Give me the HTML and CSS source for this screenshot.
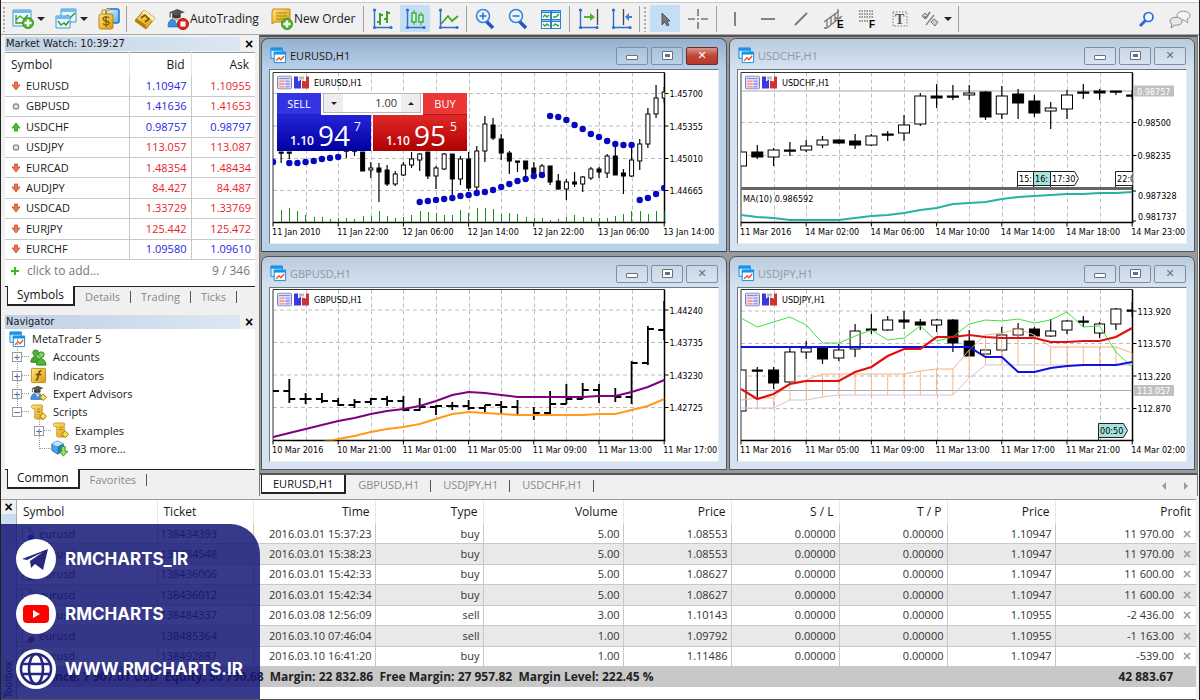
FILE: index.html
```html
<!DOCTYPE html>
<html lang="en">
<head>
<meta charset="utf-8">
<title>MetaTrader 5</title>
<link rel="stylesheet" href="styles.css">
</head>
<body>
<svg class="defs" aria-hidden="true">
  <defs>
    <linearGradient id="gold" x1="0" y1="0" x2="1" y2="1"><stop offset="0" stop-color="#ffe680"/><stop offset="1" stop-color="#d99a08"/></linearGradient>
    <linearGradient id="sky" x1="0" y1="0" x2="1" y2="1"><stop offset="0" stop-color="#dff1fd"/><stop offset="1" stop-color="#5fb2ea"/></linearGradient>
    <symbol id="plus" viewBox="0 0 10 10"><circle cx="5" cy="5" r="4.6" fill="#4fb52c" stroke="#2f8a18" stroke-width=".7"/><path d="M5 2v6M2 5h6" stroke="#fff" stroke-width="2"/></symbol>
    <symbol id="win" viewBox="0 0 18 18"><path d="M1 1h12v11H1z" fill="#d8efff" stroke="#0b8be0"/><path d="M1 1h12v3H1z" fill="#1295ea"/><path d="M4.500 5.500h12v11h-12z" fill="#fff" stroke="#0b8be0"/><path d="M4 5h13v3H4z" fill="#1295ea"/><path d="M6.500 14.500l3-3 2 2 3.500-4" fill="none" stroke="#ee5522" stroke-width="1.500"/></symbol>
    <symbol id="scroll" viewBox="0 0 18 18"><path d="M3 1h9c2 0 2 2 1 3v8h2c2 1 1 4-1 4H7c-2 0-3-2-2-4V5H3C1 4 1 1 3 1z" fill="url(#gold)" stroke="#c08a10" stroke-width=".8"/><path d="M7 5.500h4M7 8h4" stroke="#b97e08"/><path d="M14 9.500l3.500 3.500-3.500 3.500-3.500-3.500z" fill="#ffe04a" stroke="#9c7a10"/></symbol>
    <symbol id="expert" viewBox="0 0 20 20"><path d="M1 18c0-6 3-8 7-8s8 2 8 8z" fill="#3f8fdf" stroke="#1d5fa8" stroke-width=".7"/><circle cx="9" cy="8" r="4" fill="#e0b990"/><path d="M8 12l1.500 3 2-3z" fill="#fff"/><path d="M2 4l8-3 7 3-8 3z" fill="#555"/><path d="M5 5v4c2 1 6 1 8 0V5l-4 2z" fill="#3c3c3c"/><path d="M3 4v5" stroke="#444"/></symbol>
    <symbol id="down" viewBox="0 0 10 10"><path d="M3.500 1h3v3H9L5 9 1 4h2.500z" fill="#f0714c" stroke="#cf4a28" stroke-width=".8"/></symbol>
    <symbol id="up" viewBox="0 0 10 10"><path d="M3.500 9h3V6H9L5 1 1 6h2.500z" fill="#44c32c" stroke="#259414" stroke-width=".8"/></symbol>
    <symbol id="flat" viewBox="0 0 10 10"><circle cx="5" cy="5.500" r="2.600" fill="#e8e8e8" stroke="#8c8c8c" stroke-width="1.400"/></symbol>
    <symbol id="axes" viewBox="0 0 24 24"><path d="M4.500 2v18.500H22" fill="none" stroke="#2f6ecb" stroke-width="1.400"/><circle cx="4.500" cy="3" r="1.600" fill="#2f6ecb"/><circle cx="4.500" cy="20.500" r="1.600" fill="#2f6ecb"/><circle cx="21" cy="20.500" r="1.600" fill="#2f6ecb"/></symbol>
    <symbol id="doc" viewBox="0 0 16 16"><path d="M2 1h8l4 4v10H2z" fill="#fff" stroke="#888"/><path d="M10 1v4h4" fill="none" stroke="#888"/></symbol>
    <symbol id="badges" viewBox="0 0 32 14"><rect x=".5" y=".5" width="14" height="13" rx="1.500" fill="#dcdcf8" stroke="#7c7cb0"/><path d="M2 3h11" stroke="#8c8cc4"/><path d="M2.500 5h5v7h-5z" fill="#f2a0a0"/><path d="M8.500 5h4v7h-4z" fill="#9b9bf2"/><path d="M3 7h9M3 10h9" stroke="#fff" stroke-width=".7"/><path d="M17 1h4v5l3-2v9h-7z" fill="#3c38e0"/><path d="M32 1h-3v5l-4-1v8h7z" fill="#cf3434"/><path d="M22 1h5v3h-5z" fill="#bbb"/></symbol>
  </defs>
</svg>

<header class="toolbar">
  <span class="grip"></span>
  <button class="tool menu" aria-label="New chart"><svg viewBox="0 0 24 24"><path d="M2 3h18v16H2z" fill="#eef8ff" stroke="#3f9ad8"/><path d="M2 3h18v3H2z" fill="#6cbcf0"/><path d="M5 8v8h12M5 13l4-4 4 3 4-4" fill="none" stroke="#39982a" stroke-width="1.300"/><use href="#plus" x="11" y="10" width="12" height="12"/></svg><i class="arrow"></i></button>
  <button class="tool menu" aria-label="Profiles"><svg viewBox="0 0 24 24"><path d="M7 2h15v13H7z" fill="#e6f5ff" stroke="#3f9ad8"/><path d="M7 2h15v3H7z" fill="#6cbcf0"/><path d="M13 8l3 3 5-5" fill="none" stroke="#39982a" stroke-width="1.500"/><path d="M2 9h14v12H2z" fill="#e6f5ff" stroke="#3f9ad8"/><path d="M2 9h14v3H2z" fill="#6cbcf0"/><path d="M4 14l3 4 3-2 2 2 3-4" fill="none" stroke="#39982a" stroke-width="1.500"/></svg><i class="arrow"></i></button>
  <button class="tool slim" aria-label="Symbols"><svg viewBox="0 0 24 24"><rect x="9" y="2" width="13" height="14" rx="2" fill="url(#sky)" stroke="#1f73c0" stroke-width="1.500"/><path d="M5 6V5c0-1 1-2 2-2h6" fill="none" stroke="#e0b030" stroke-width="2"/><rect x="2" y="7" width="14" height="15" rx="2" fill="url(#gold)" stroke="#b98408"/><path d="M12 11c-1-1.500-6-1.500-6 1s6 1.500 6 4-5 2.500-6 .500M9 9v11" fill="none" stroke="#8c5c00" stroke-width="1.300"/></svg></button>
  <span class="sep"></span>
  <button class="tool" aria-label="Market"><svg viewBox="0 0 24 24"><path d="M2 14l9-11 11 8-9 11z" fill="url(#gold)" stroke="#a97808"/><path d="M2 14l11 8v-4L3 11z" fill="#b98110"/><path d="M11 3l11 8-2 3L9 6z" fill="#ffefaa"/><path d="M8 11l4-3 4 4-4 3" fill="none" stroke="#7b5200" stroke-width="1.700"/></svg></button>
  <button class="tool auto"><svg viewBox="0 0 24 24"><use href="#expert" x="1" y="1" width="21" height="21"/><circle cx="17" cy="17" r="5.500" fill="#e02a1e" stroke="#a81410"/><rect x="14.500" y="14.500" width="5" height="5" fill="#fff"/></svg>AutoTrading</button>
  <button class="tool order"><svg viewBox="0 0 24 24"><path d="M3 2h17v13H5l-3 2V5z" fill="url(#gold)" stroke="#c08a10"/><path d="M6 6h11M6 9h11M6 12h8" stroke="#b57e0c"/><use href="#plus" x="11" y="11" width="12" height="12"/></svg>New Order</button>
  <span class="sep"></span>
  <button class="tool" aria-label="Bar chart"><svg viewBox="0 0 24 24"><use href="#axes"/><path d="M10 6v12M7 15h3M10 8h3M17 4v12M14 12h3M17 6h3" stroke="#3ba421" stroke-width="2"/></svg></button>
  <button class="tool on" aria-label="Candlesticks"><svg viewBox="0 0 24 24"><use href="#axes"/><path d="M11 3v15M18 5v13" stroke="#3ba421"/><rect x="9" y="6" width="4" height="9" fill="#cfe" stroke="#3ba421" stroke-width="1.300"/><rect x="16" y="8" width="4" height="7" fill="#cfe" stroke="#3ba421" stroke-width="1.300"/></svg></button>
  <button class="tool" aria-label="Line chart"><svg viewBox="0 0 24 24"><use href="#axes"/><path d="M5 17l7-8 4 5 6-5" fill="none" stroke="#3ba421" stroke-width="1.700"/></svg></button>
  <span class="sep"></span>
  <button class="tool" aria-label="Zoom in"><svg viewBox="0 0 24 24"><path d="M13 14l7 7" stroke="#2358b8" stroke-width="3.500"/><circle cx="10" cy="9" r="6.500" fill="#e9f5ff" stroke="#3c80dd" stroke-width="1.500"/><path d="M10 5.500v7M6.500 9h7" stroke="#2b6fd0" stroke-width="1.500"/></svg></button>
  <button class="tool" aria-label="Zoom out"><svg viewBox="0 0 24 24"><path d="M13 14l7 7" stroke="#2358b8" stroke-width="3.500"/><circle cx="10" cy="9" r="6.500" fill="#e9f5ff" stroke="#3c80dd" stroke-width="1.500"/><path d="M6.500 9h7" stroke="#2b6fd0" stroke-width="1.500"/></svg></button>
  <button class="tool" aria-label="Tile windows"><svg viewBox="0 0 24 24"><path d="M2 3h20v19H2z" fill="#2c7fd4"/><path d="M3 6h8v6H3zM13 6h8v6h-8zM3 15h8v6H3zM13 15h8v6h-8z" fill="#effaff"/><path d="M4 10l2-2 2 2 2-2M14 10h3l3-3M4 17l2 2 2-2 2 2M14 19l2-2 4 2" fill="none" stroke="#3ba421" stroke-width="1.400"/><path d="M3 4.500h8M13 4.500h8M3 13.500h8M13 13.500h8" stroke="#7ebef0"/></svg></button>
  <span class="sep"></span>
  <button class="tool" aria-label="Auto scroll"><svg viewBox="0 0 24 24"><use href="#axes"/><path d="M21.500 2v16" stroke="#444" stroke-width="1.300"/><path d="M8 9h6V6l5 4-5 4v-3H8z" fill="#4fb52c"/></svg></button>
  <button class="tool" aria-label="Chart shift"><svg viewBox="0 0 24 24"><use href="#axes"/><path d="M14.500 2v16" stroke="#444" stroke-width="1.300"/><path d="M23 9h-3V6l-4 4 4 4v-3h3z" fill="#3c80dd"/></svg></button>
  <span class="sep"></span>
  <span class="grip"></span>
  <button class="tool on" aria-label="Cursor"><svg viewBox="0 0 24 24"><path d="M9 6v12l3-3 2 4 2-1-2-4h3z" fill="#777" stroke="#444" stroke-width=".8"/></svg></button>
  <button class="tool" aria-label="Crosshair"><svg viewBox="0 0 24 24"><path d="M12 2v7M12 15v7M2 12h7M15 12h7M11 12h2" stroke="#777" stroke-width="1.600"/></svg></button>
  <span class="sep"></span>
  <button class="tool" aria-label="Vertical line"><svg viewBox="0 0 24 24"><path d="M12 5v14" stroke="#777" stroke-width="1.800"/></svg></button>
  <button class="tool" aria-label="Horizontal line"><svg viewBox="0 0 24 24"><path d="M5 12h14" stroke="#777" stroke-width="1.800"/></svg></button>
  <button class="tool" aria-label="Trend line"><svg viewBox="0 0 24 24"><path d="M6 18L18 6" stroke="#777" stroke-width="1.800"/></svg></button>
  <button class="tool" aria-label="Equidistant channel"><svg viewBox="0 0 24 24"><path d="M2 15L17 4M5 21L20 9M5 12v9M9 9v9M13 6v9M16 2v8M2 21h3M13 11h6" stroke="#777" stroke-width="1.300"/><text x="15" y="21" class="glyph">E</text></svg></button>
  <button class="tool" aria-label="Fibonacci"><svg viewBox="0 0 24 24"><path d="M4 4h15M4 7h15M4 10h15M4 14h9" stroke="#777" stroke-width="1.300" stroke-dasharray="1.500 1"/><text x="14" y="21" class="glyph">F</text></svg></button>
  <button class="tool" aria-label="Text"><svg viewBox="0 0 24 24"><path d="M5 5h14v14H5z" fill="none" stroke="#777" stroke-dasharray="1.500 1.500"/><text x="7" y="17" class="glyph serif">T</text></svg></button>
  <button class="tool menu last" aria-label="Objects"><svg viewBox="0 0 24 24"><path d="M4 9l3 3 3-3-3-3z" fill="#ddd" stroke="#777"/><path d="M6 9l2 2 4-6" fill="none" stroke="#777" stroke-width="1.500"/><path d="M8 18l8-10" stroke="#888" stroke-width="1.500"/><path d="M13 15l3-3 4 3-3 4z" fill="#ccc" stroke="#777"/></svg><i class="arrow"></i></button>
  <span class="sep"></span>
  <span class="spacer"></span>
  <button class="tool" aria-label="Search"><svg viewBox="0 0 24 24"><path d="M5 19l6-6" stroke="#2c6bd4" stroke-width="3"/><circle cx="13.500" cy="10" r="4.500" fill="#eaf5ff" stroke="#2c6bd4" stroke-width="1.700"/></svg></button>
  <button class="tool" aria-label="Chat"><svg viewBox="0 0 24 24"><path d="M9 8c0-5 13-5 13 0 0 3-2 4-3 4l1 4-4-3c-5 0-7-2-7-5z" fill="#f4f4f4" stroke="#999"/><path d="M2 14c0-5 12-5 12 0s-6 4-7 4l-4 3 1-4c-1 0-2-2-2-3z" fill="#e8e8e8" stroke="#888"/></svg></button>
</header>

<main class="middle">
  <aside class="side">
    <section class="panel">
      <h2 class="panel-title">Market Watch: 10:39:27<button class="close" aria-label="Close Market Watch">×</button></h2>
      <table class="quotes">
        <colgroup><col class="q-sym"><col class="q-bid"><col></colgroup>
        <thead><tr><th>Symbol</th><th>Bid</th><th>Ask</th></tr></thead>
        <tbody>
          <tr><td><svg><use href="#down"/></svg>EURUSD</td><td class="b">1.10947</td><td class="r">1.10955</td></tr>
          <tr><td><svg><use href="#flat"/></svg>GBPUSD</td><td class="b">1.41636</td><td class="r">1.41653</td></tr>
          <tr><td><svg><use href="#up"/></svg>USDCHF</td><td class="b">0.98757</td><td class="b">0.98797</td></tr>
          <tr><td><svg><use href="#flat"/></svg>USDJPY</td><td class="r">113.057</td><td class="r">113.087</td></tr>
          <tr><td><svg><use href="#down"/></svg>EURCAD</td><td class="r">1.48354</td><td class="r">1.48434</td></tr>
          <tr><td><svg><use href="#down"/></svg>AUDJPY</td><td class="r">84.427</td><td class="r">84.487</td></tr>
          <tr><td><svg><use href="#down"/></svg>USDCAD</td><td class="r">1.33729</td><td class="r">1.33769</td></tr>
          <tr><td><svg><use href="#down"/></svg>EURJPY</td><td class="r">125.442</td><td class="r">125.472</td></tr>
          <tr><td><svg><use href="#down"/></svg>EURCHF</td><td class="b">1.09580</td><td class="b">1.09610</td></tr>
        </tbody>
      </table>
      <div class="add-row"><svg viewBox="0 0 10 10"><path d="M5 1v8M1 5h8" stroke="#3fb822" stroke-width="2"/></svg><span>click to add...</span><span class="count">9 / 346</span></div>
      <nav class="tabs"><button class="tab active">Symbols</button><button class="tab">Details</button><button class="tab">Trading</button><button class="tab">Ticks</button></nav>
    </section>
    <section class="panel navigator">
      <h2 class="panel-title">Navigator<button class="close" aria-label="Close Navigator">×</button></h2>
      <ul class="tree">
        <li class="root"><svg><use href="#win"/></svg>MetaTrader 5</li>
        <li class="l1"><button aria-label="Expand Accounts">+</button><svg viewBox="0 0 18 18"><circle cx="6" cy="4" r="3" fill="#58b53b" stroke="#2c7d1b"/><path d="M1 14c0-8 9-8 10 0z" fill="#4aa82e" stroke="#2c7d1b"/><circle cx="12" cy="6" r="3" fill="#7fd35e" stroke="#2c7d1b"/><path d="M7 17c0-9 9-9 10 0z" fill="#53b836" stroke="#2c7d1b"/></svg>Accounts</li>
        <li class="l1"><button aria-label="Expand Indicators">+</button><svg viewBox="0 0 18 18"><rect x="1.500" y="1.500" width="15" height="15" rx="1" fill="url(#gold)" stroke="#c08a10"/><path d="M12 4c-4-1-2 10-6 10M6 8h6" fill="none" stroke="#6b4500" stroke-width="1.500"/></svg>Indicators</li>
        <li class="l1"><button aria-label="Expand Expert Advisors">+</button><svg viewBox="0 0 18 18"><use href="#expert" width="17" height="17"/><path d="M14 9.500l3.500 3.500-3.500 3.500-3.500-3.500z" fill="#ffe04a" stroke="#9c7a10"/></svg>Expert Advisors</li>
        <li class="l1"><button aria-label="Collapse Scripts">−</button><svg><use href="#scroll"/></svg>Scripts</li>
        <li class="l2"><button aria-label="Expand Examples">+</button><svg><use href="#scroll"/></svg>Examples</li>
        <li class="l2 leaf"><svg viewBox="0 0 18 18"><path d="M1 4l6-3 6 3v7l-6 4-6-4z" fill="#4aa5e6" stroke="#1d6eb0"/><path d="M1 4l6 3 6-3-6-3z" fill="#bfe3fa"/><path d="M7 7v8l6-4V4z" fill="#2277bd"/><path d="M11 7h4v5h3l-5 5-4-5h2z" fill="#8fe05c" stroke="#3c8f1b"/></svg>93 more...</li>
      </ul>
      <nav class="tabs"><button class="tab active">Common</button><button class="tab">Favorites</button></nav>
    </section>
  </aside>

  <section class="workspace">
    <div class="windows">
      <article class="window current">
        <header><svg><use href="#win"/></svg><h3>EURUSD,H1</h3><button class="wb min" aria-label="Minimize"></button><button class="wb max" aria-label="Maximize"></button><button class="wb x" aria-label="Close">✕</button></header>
        <div class="client"><svg class="chart" id="eurusd" viewBox="270 70 448 173"></svg>
          <form class="trade">
            <button type="button" class="sell">SELL</button>
            <div class="lots"><button type="button" aria-label="Decrease"><i class="arrow"></i></button><input aria-label="Volume" value="1.00"><button type="button" aria-label="Increase"><i class="arrow rise"></i></button></div>
            <button type="button" class="buy">BUY</button>
            <div class="price bid"><small>1.10</small><b>94</b><sup>7</sup></div>
            <div class="price ask"><small>1.10</small><b>95</b><sup>5</sup></div>
          </form>
        </div>
      </article>
      <article class="window">
        <header><svg><use href="#win"/></svg><h3>USDCHF,H1</h3><button class="wb min" aria-label="Minimize"></button><button class="wb max" aria-label="Maximize"></button><button class="wb x" aria-label="Close">✕</button></header>
        <div class="client"><svg class="chart" id="usdchf" viewBox="738 70 448 173"></svg></div>
      </article>
      <article class="window">
        <header><svg><use href="#win"/></svg><h3>GBPUSD,H1</h3><button class="wb min" aria-label="Minimize"></button><button class="wb max" aria-label="Maximize"></button><button class="wb x" aria-label="Close">✕</button></header>
        <div class="client"><svg class="chart" id="gbpusd" viewBox="270 288 448 173"></svg></div>
      </article>
      <article class="window">
        <header><svg><use href="#win"/></svg><h3>USDJPY,H1</h3><button class="wb min" aria-label="Minimize"></button><button class="wb max" aria-label="Maximize"></button><button class="wb x" aria-label="Close">✕</button></header>
        <div class="client"><svg class="chart" id="usdjpy" viewBox="738 288 448 173"></svg></div>
      </article>
    </div>
    <nav class="tabs chart-tabs"><button class="tab active">EURUSD,H1</button><button class="tab">GBPUSD,H1</button><button class="tab">USDJPY,H1</button><button class="tab">USDCHF,H1</button><span class="spacer"></span><button class="scroll" aria-label="Scroll left"><i class="arrow left"></i></button><button class="scroll" aria-label="Scroll right"><i class="arrow right"></i></button></nav>
  </section>
</main>

<section class="terminal">
  <div class="rail"><button class="close" aria-label="Close Toolbox">×</button><span>Toolbox</span></div>
  <table class="trades">
    <colgroup><col class="t-sym"><col class="t-tic"><col class="t-time"><col class="t-type"><col class="t-vol"><col class="t-num"><col class="t-num"><col class="t-num"><col class="t-num"><col></colgroup>
    <thead><tr><th>Symbol</th><th>Ticket</th><th>Time</th><th>Type</th><th>Volume</th><th>Price</th><th>S / L</th><th>T / P</th><th>Price</th><th>Profit</th></tr></thead>
    <tbody id="trades"></tbody>
    <tfoot><tr><td colspan="9">Balance: 7 907.01 USD&nbsp; Equity: 50 790.68&nbsp; Margin: 22 832.86&nbsp; Free Margin: 27 957.82&nbsp; Margin Level: 222.45 %</td><td>42 883.67</td></tr></tfoot>
  </table>
  <div class="social">
    <a href="#telegram"><svg viewBox="0 0 40 40"><circle cx="20" cy="20" r="20" fill="#fff"/><path d="M6 20L32 10l-5 21-8-6-4 4-1-7 13-9-16 8z" fill="#26277f"/></svg>RMCHARTS_IR</a>
    <a href="#youtube"><svg viewBox="0 0 40 40"><circle cx="20" cy="20" r="20" fill="#fff"/><rect x="7" y="11" width="26" height="18" rx="4" fill="#f00"/><path d="M17 16l7 4-7 4z" fill="#fff"/></svg>RMCHARTS</a>
    <a href="#site"><svg viewBox="0 0 40 40"><circle cx="20" cy="20" r="20" fill="#fff"/><g fill="none" stroke="#26277f" stroke-width="2.600"><circle cx="20" cy="20" r="15"/><ellipse cx="20" cy="20" rx="7" ry="15"/><path d="M6 15h28M6 25h28"/></g></svg>WWW.RMCHARTS.IR</a>
  </div>
</section>
<script src="charts.js"></script>
</body>
</html>
```

FILE: styles.css
```css
*, *::before, *::after { box-sizing: border-box; }
body {
  margin: 0;
  min-height: 100vh;
  display: flex;
  flex-direction: column;
  overflow: hidden;
  background: #f0f0f0;
  border-left: 1px solid #222;
  border-right: 1px solid #222;
  font: 12px/16px "Open Sans", "Noto Sans", sans-serif;
  color: #1a1a1a;
}
button { font: inherit; color: inherit; background: none; border: 0; padding: 0; margin: 0; }
h2, h3, ul { margin: 0; padding: 0; font-size: 11px; font-weight: 400; list-style: none; }
.defs { position: absolute; width: 0; height: 0; }
.spacer { flex: 1; }
.arrow { display: block; width: 0; height: 0; border: 4px solid transparent; border-top-color: #222; border-bottom: 0; }
.arrow.rise { border: 3px solid transparent; border-bottom-color: #222; border-top: 0; }
.arrow.left { border: 4px solid transparent; border-right-color: #999; border-left: 0; }
.arrow.right { border: 4px solid transparent; border-left-color: #999; border-right: 0; }

/* toolbar */
.toolbar {
  display: flex;
  align-items: center;
  gap: 3px;
  height: 35px;
  padding: 4px 4px 1px 1px;
  border-bottom: 1px solid #a8a8a8;
  background: linear-gradient(#fafafa 2px, #c8c8c8 2px, #c8c8c8 3px, #f0f0f0 3px);
}
.grip { width: 4px; height: 26px; background: radial-gradient(circle, #aaa 1px, transparent 1px) 0 0 / 4px 4px; }
.sep { width: 1px; height: 26px; background: #a0a0a0; }
.tool { width: 30px; height: 27px; flex: none; display: flex; align-items: center; justify-content: center; white-space: nowrap; }
.tool svg { width: 24px; height: 24px; flex: none; }
.tool.menu { width: 40px; padding-left: 2px; gap: 2px; justify-content: flex-start; }
.tool.slim { width: 28px; }
.tool.last { padding-left: 0; width: 37px; }
.tool.auto { width: 101px; padding-left: 3px; justify-content: flex-start; }
.tool.order { width: 93px; padding-left: 3px; justify-content: flex-start; }
.tool.on { background: #c3def5; }
.glyph { font: 700 10px "Liberation Sans", sans-serif; }
.glyph.serif { font: 700 14px "Liberation Serif", serif; fill: #555; }

/* side panels */
.middle { display: flex; height: 461px; }
.side { width: 258px; padding: 2px 4px 0; flex: none; display: flex; flex-direction: column; gap: 7px; }
.panel-title {
  display: flex;
  align-items: center;
  justify-content: space-between;
  height: 14px;
  padding: 0 1px;
  font: 11px/14px "DejaVu Sans Condensed", sans-serif;
  background: linear-gradient(90deg, #bfd1e4, #dce7f3 94%, #f0f0f0 94%);
}
.close { font: 700 14px/12px "Liberation Sans", sans-serif; color: #000; width: 10px; text-align: center; }
.quotes { width: 100%; height: 208px; margin-top: 1px; table-layout: fixed; border-collapse: collapse; background: #fff; border-top: 1px solid #999; font-size: 11px; }
.q-sym { width: 124px; }
.q-bid { width: 62px; }
.quotes th { height: 24px; padding: 0 6px; font-size: 12px; font-weight: 400; text-align: right; border-right: 1px solid #e4e4e4; }
.quotes td { padding: 0 4px 0 0; text-align: right; border-right: 1px solid #c8c8c8; border-bottom: 1px solid #c8c8c8; line-height: 14px; }
.quotes th:first-child, .quotes td:first-child { text-align: left; padding-left: 6px; }
.quotes td:last-child, .quotes th:last-child { border-right: 0; }
.quotes svg { width: 10px; height: 10px; margin-right: 5px; vertical-align: -1px; }
.b { color: #2626e0; }
.r { color: #e8222c; }
.add-row { display: flex; align-items: center; height: 26px; padding: 0 5px 5px; gap: 7px; background: #fff; color: #777; }
.add-row svg { width: 10px; height: 10px; }
.count { margin-left: auto; }
.tabs { display: flex; height: 22px; color: #888; font-size: 11px; }
.tab { padding: 0 11px 0 10px; position: relative; }
.side .tabs { background: linear-gradient(#222 1px, transparent 1px); padding-left: 2px; }
.side .tab { height: 21px; }
.tab:not(.active)::after { content: ""; position: absolute; right: 0; top: 5px; height: 12px; border-right: 1px solid #555; }
.tab.active { color: #111; background: #fff; border: 2px solid #222; border-top: 0; border-left-width: 1px; padding: 0 9px; }
.side .tab.active { height: 20px; font-size: 12px; }
.tree { display: flex; flex-direction: column; height: 140px; padding: 1px 0 11px; background: #fff; }
.tree li { flex: 1; position: relative; display: flex; align-items: center; gap: 6px; padding-left: 7px; }
.tree svg { width: 17px; height: 17px; flex: none; }
.tree .root { padding-left: 4px; }
.tree .l2 { padding-left: 29px; }
.tree .leaf { padding-left: 46px; }
.tree .l1 svg, .tree .l2:not(.leaf) svg { margin-left: 2px; }
.tree .l1::before, .tree .l2::before {
  content: "";
  position: absolute;
  left: 12px;
  bottom: 50%;
  width: 12px;
  height: 100%;
  border-left: 1px dotted #999;
  border-bottom: 1px dotted #999;
}
.tree .l2::before { left: 34px; }
.tree button { position: relative; width: 10px; height: 10px; border: 1px solid #999; font: 9px/8px "DejaVu Sans", sans-serif; color: #223c8c; flex: none; background: #fff; }

/* charts workspace */
.workspace { flex: 1; display: flex; flex-direction: column; border: 1px solid #777; border-top: 2px solid #555; border-bottom: 0; margin-right: 1px; }
.windows { display: grid; grid-template-columns: 1fr 1fr; gap: 4px 2px; padding: 1px 2px 3px 1px; background: #9a9a9a; border-bottom: 2px solid #555; }
.window { border: 1px solid #4b5661; border-radius: 7px 7px 0 0; padding: 0 7px 7px; background: linear-gradient(#bccbdc, #d5e3f1 30px); color: #8d99a8; height: 214px; }
.window.current { background: linear-gradient(#94b0cf, #b9d1e9 30px); color: #1a1a1a; border-bottom-color: #20465e; }
.window header { display: flex; align-items: center; height: 30px; padding-top: 3px; gap: 2px; }
.window header svg { width: 17px; height: 17px; margin: 0 1px 0 1px; }
.window h3 { flex: 1; }
.wb { width: 32px; height: 18px; border: 1px solid #7f8ea3; border-radius: 2px; display: flex; align-items: center; justify-content: center; color: #667080; margin-left: 1px; font: 700 11px/16px "DejaVu Sans", sans-serif; background: rgba(255,255,255,.12); }
.wb.x { margin-right: 1px; }
.min::before { content: ""; width: 12px; height: 5px; margin-top: 4px; border: 1px solid #667080; background: #fff; border-radius: 1px; }
.max::before { content: ""; width: 11px; height: 9px; border: 1px solid #667080; background: #667080; box-shadow: inset 0 0 0 2px #fff; border-radius: 1px; }
.current .x { color: #fff; background: linear-gradient(#d99488, #c04433 50%, #b33a2b); border-color: #702c24; }
.client { position: relative; background: #fff; border: 1px solid #6d7783; border-right-color: #e8eef4; border-bottom-color: #e8eef4; }
.chart { display: block; width: 100%; height: auto; font: 9px "DejaVu Sans Condensed", "DejaVu Sans", sans-serif; overflow: visible; }
.trade { position: absolute; left: 7px; top: 23px; width: 190px; display: grid; grid-template-columns: 44px 98px 44px; gap: 0 2px; color: #fff; }
.sell, .buy { height: 22px; font-size: 11px; }
.sell { background: #3434e4; border-bottom: 1px solid #2020a8; }
.buy { background: #ec3737; border-bottom: 1px solid #b01818; }
.lots { display: flex; height: 20px; border: 1px solid #b8b8b8; color: #222; background: #fff; font-size: 11px; }
.lots button { width: 19px; flex: none; display: grid; place-items: center; background: #ededed; }
.lots .arrow { border-left-width: 3px; border-right-width: 3px; border-top-width: 3px; }
.lots .rise { border-top-width: 0; }
.lots input { width: 57px; min-width: 0; flex: 1; border: 0; padding: 0 4px; text-align: right; font: inherit; color: #333; }
.price { height: 36px; display: flex; align-items: flex-end; padding: 0 8px 3px 13px; gap: 4px; }
.price.bid { grid-column: 1 / 3; grid-row: 2; width: 94px; background: linear-gradient(#2424d8, #0000a0); }
.price.ask { grid-column: 2 / 4; grid-row: 2; width: 94px; justify-self: end; background: linear-gradient(#e02828, #b00000); }
.price small { font-size: 12px; font-weight: 600; line-height: 14px; }
.price b { font-size: 28px; font-weight: 400; line-height: 26px; }
.price sup { font-size: 12px; line-height: 12px; align-self: flex-start; padding-top: 6px; }
.chart-tabs { background: #f0f0f0; flex: 1; height: auto; padding-left: 1px; }
.chart-tabs .tab { height: 20px; padding: 0 12px; }
.chart-tabs .tab.active { height: 19px; padding: 0 11px; }
.scroll { width: 22px; display: grid; place-items: center; }

/* toolbox */
.terminal { position: relative; display: flex; flex: 1; margin-top: 3px; background: #fff; border-top: 1px solid #999; border-bottom: 1px solid #555; margin-right: 3px; }
.rail { width: 16px; background: linear-gradient(#f0f0f0 14px, #c9dcef 14px, #dce7f3 60px); border-right: 1px solid #aaa; display: flex; flex-direction: column; align-items: center; justify-content: space-between; padding: 1px 0; overflow: hidden; }
.rail span { writing-mode: vertical-rl; transform: rotate(180deg); font: 11px/12px "DejaVu Sans Condensed", sans-serif; }
.trades { flex: 1; height: 187px; table-layout: fixed; border-collapse: collapse; font-size: 11px; }
.t-sym { width: 140px; }
.t-tic { width: 96px; }
.t-time { width: 122px; }
.t-type, .t-num { width: 108px; }
.t-vol { width: 140px; }
.trades th { height: 24px; font-size: 12px; font-weight: 400; text-align: right; padding: 0 5px; border-right: 1px solid #e8e8e8; }
.trades th:nth-child(-n+2) { text-align: left; padding-left: 6px; }
.trades td { text-align: right; padding: 0 3px; line-height: 14px; border-right: 1px solid #c8c8c8; border-bottom: 1px solid #c8c8c8; color: #333; white-space: nowrap; }
.trades tbody tr:nth-child(even) { background: #e9e9e9; }
.trades tbody td:nth-child(-n+2) { text-align: left; }
.trades svg { width: 15px; height: 14px; margin-right: 4px; vertical-align: -3px; }
.trades td:last-child, .trades th:last-child { border-right: 0; }
.trades tbody td:last-child { padding-right: 4px; }
.trades td button { margin-left: 8px; width: 10px; color: #999; font: 700 12px/12px "DejaVu Sans", sans-serif; }
.trades tfoot td { height: 20px; background: #c8c8c8; font-weight: 700; color: #222; }
.trades tfoot td:first-child { padding-left: 12px; text-align: left; border-right: 0; font-size: 12px; }
.trades tfoot td:last-child { padding-right: 23px; font-size: 12px; }
.social { position: absolute; left: 0; bottom: 0; width: 259px; height: 175px; padding: 15px 15px 10px; display: flex; flex-direction: column; justify-content: space-between; background: rgba(20, 22, 118, .85); border-radius: 0 30px 0 0; }
.social a { display: flex; align-items: center; gap: 9px; color: #fff; text-decoration: none; font: 700 17px/20px Inter, sans-serif; }
.social svg { width: 40px; height: 40px; flex: none; }
```

FILE: charts.js
```javascript
const NS = "http://www.w3.org/2000/svg";

function el(parent, tag, attrs, text) {
  const node = document.createElementNS(NS, tag);
  for (const key in attrs) node.setAttribute(key, attrs[key]);
  if (text !== undefined) node.textContent = text;
  parent.appendChild(node);
  return node;
}

function line(svg, x1, y1, x2, y2, stroke = "#000", width = 1, extra = {}) {
  return el(svg, "line", { x1, y1, x2, y2, stroke, "stroke-width": width, ...extra });
}

/* Grid, axes and labels shared by every chart. */
function frame(svg, o) {
  const right = o.x + 391.5;
  for (let k = 1; k < 12; k++) {
    const x = Math.round(o.x + k * 32.6) + 0.5;
    line(svg, x, o.top, x, o.bottom, "#bdbdbd", 1, { "stroke-dasharray": "4 3" });
  }
  o.prices.forEach(([y, label]) => {
    line(svg, o.x, y, right, y, "#bdbdbd", 1, { "stroke-dasharray": "4 3" });
    line(svg, right, y, right + 4, y);
    el(svg, "text", { x: right + 5, y: y + 3.5 }, label);
  });
  line(svg, o.x, o.top, right, o.top, "#333");
  line(svg, o.x, o.top, o.x, o.bottom, "#333");
  line(svg, right, o.top, right, o.bottom, "#000", 1.5);
  line(svg, o.x, o.bottom, right + 1, o.bottom, "#000", 1.5);
  o.times.forEach((label, n) => {
    const x = o.x + n * 65.2;
    line(svg, x, o.bottom, x, o.bottom + 4);
    el(svg, "text", { x: x - 1, y: o.bottom + 12.5 }, label);
  });
  const clip = el(svg, "clipPath", { id: svg.id + "-clip" });
  el(clip, "rect", { x: o.x, y: o.top, width: 391.5, height: o.bottom - o.top });
  return el(svg, "g", { "clip-path": `url(#${svg.id}-clip)` });
}

function caption(svg, o, name) {
  el(svg, "use", { href: "#badges", x: o.x + 4, y: o.top + 3, width: 32, height: 14 });
  el(svg, "text", { x: o.x + 41, y: o.top + 13 }, name);
}

/* Each candle: index, high, body top, body bottom, low, filled. */
function candles(g, x0, step, width, list) {
  list.forEach(([i, high, top, bottom, low, filled]) => {
    const x = x0 + i * step;
    line(g, x, high, x, low, "#000", 1.2);
    el(g, "rect", { x: x - width / 2, y: top, width, height: Math.max(1.2, bottom - top), fill: filled ? "#000" : "#fff", stroke: "#000", "stroke-width": 1 });
  });
}

function curve(g, x0, step, start, ys, stroke, width) {
  el(g, "polyline", { points: ys.map((y, n) => `${x0 + (start + n) * step},${y}`).join(" "), fill: "none", stroke, "stroke-width": width });
}

function priceTag(svg, x, y, label) {
  el(svg, "rect", { x: x + 2, y: y - 5.5, width: 40, height: 11, fill: "#c0c0c0" });
  el(svg, "text", { x: x + 5, y: y + 3.5, fill: "#fff" }, label);
}

function eventTag(g, x, y, width, label, fill, arrow) {
  const tip = arrow ? `l4 7l-4 7` : "v14";
  el(g, "path", { d: `M${x} ${y}h${width}${tip}h${-width}z`, fill, stroke: "#222" });
  line(g, x, y + 14, x, y + 18, "#222");
  el(g, "text", { x: x + 1.5, y: y + 10.5 }, label);
}

{
  const svg = document.getElementById("eurusd");
  const o = { x: 273, top: 72.5, bottom: 222.5,
    prices: [[93.5, "1.45700"], [126, "1.45355"], [158.5, "1.45010"], [190.5, "1.44665"]],
    times: ["11 Jan 2010", "11 Jan 22:00", "12 Jan 06:00", "12 Jan 14:00", "12 Jan 22:00", "13 Jan 06:00", "13 Jan 14:00"] };
  const g = frame(svg, o);
  const volumes = [210,208,211,215,217,217,219,218,218,219,216,216,211,216,218,217,215,211,212,213,215,215,210,213,208,208,209,214,213,214,217,218,218,220,219,217,215,217,218,218,218,216,214,211,211,214,211,211,213];
  volumes.forEach((y, n) => { const x = Math.round(281 + n * 8.15) + 0.5; line(g, x, y, x, 222, "#178f17", 1); });
  candles(g, 273, 8.15, 4, [
    [1,152,152,152,163,1],[2,152,152,152,159,1],[9,150,150,150,158,1],[10,150,150,150,156,1],[11,152,152,171,171,1],
    [12,162,168,170,178,0],[13,163,168,172,202,1],[14,165,170,184,186,1],[15,171,174,184,186,0],[16,162,165,175,176,0],
    [17,152,159,165,168,0],[18,153,154,160,171,0],[19,152,152,176,179,1],[20,166,168,176,189,0],[21,153,154,169,170,0],
    [22,154,154,179,195,1],[23,156,159,179,185,0],[24,152,159,188,191,1],[25,146,151,187,192,0],[26,116,124,151,162,0],
    [27,118,125,138,140,1],[28,134,139,153,160,1],[29,151,153,161,174,1],[30,161,161,162,172,1],[31,161,161,169,177,1],
    [32,162,168,173,175,1],[33,164,166,173,175,0],[34,166,166,182,185,1],[35,174,181,189,190,1],[36,179,182,189,200,0],
    [37,172,182,184,187,1],[38,176,177,184,192,0],[39,167,169,178,180,0],[40,167,169,172,178,1],[41,154,156,173,178,0],
    [42,143,156,175,175,1],[43,169,173,176,194,1],[44,147,160,176,177,0],[45,139,144,161,170,0],[46,108,114,144,148,0],
    [47,85,98,114,118,0],[48,87,92,98,103,0]]);
  const dots = (start, ys) => ys.forEach((y, n) => el(g, "circle", { cx: 273 + (start + n) * 8.15, cy: y, r: 3.2, fill: "#0808c0" }));
  dots(0, [162]);
  dots(2, [163,163,162,161,159,158,157]);
  dots(18, [202,201,200,199,198,196,195,193,192,190,187,184,181,179,176,175]);
  dots(34, [116,117,120,125,129,134,137,141,144,145,145]);
  dots(45, [200,198,194,188]);
  caption(svg, o, "EURUSD,H1");
}

{
  const svg = document.getElementById("usdchf");
  const o = { x: 741, top: 72.5, bottom: 222.5, prices: [[122.5, "0.98500"], [155.5, "0.98235"]],
    times: ["11 Mar 2016", "14 Mar 02:00", "14 Mar 06:00", "14 Mar 10:00", "14 Mar 14:00", "14 Mar 18:00", "14 Mar 23:00"] };
  const g = frame(svg, o);
  line(g, 741, 91, 1132, 91, "#aaa", 1.2);
  candles(g, 741, 16.3, 11, [
    [0,152,152,166,166,0],[1,145,152,157,159,1],[2,148,150,157,166,0],[3,142,150,151,156,1],[4,140,146,150,152,0],
    [5,136,140,145,148,0],[6,139,140,143,144,1],[7,134,141,145,149,1],[8,134,136,145,146,0],[9,131,134,135,141,1],
    [10,115,125,133,141,0],[11,93,96,124,126,0],[12,84,96,98,108,1],[13,85,96,97,100,1],[14,85,93,95,100,0],
    [15,91,92,117,120,1],[16,86,96,114,119,0],[17,89,94,103,119,1],[18,95,101,113,117,1],[19,102,108,111,129,0],
    [20,90,95,109,119,0],[21,84,92,93,99,1],[22,89,91,93,100,1],[23,91,91,92,95,1],[24,90,95,96,99,1]]);
  eventTag(g, 1017.5, 171.5, 16, "15:", "#fff");
  eventTag(g, 1033.5, 171.5, 17, "16:", "#a5e3dd");
  eventTag(g, 1050.5, 171.5, 24, "17:30", "#fff", true);
  eventTag(g, 1115.5, 171.5, 24, "22:00", "#fff");
  line(svg, 741, 188.500, 1132, 188.500, "#666", 3);
  curve(g, 741, 16.3, 0, [215,217,218,220,220,220,220,218,216,215,213,210,208,204,203,202,199,197,196,195,194,194,193,193,192], "#28b1a5", 2);
  el(svg, "text", { x: 743, y: 202 }, "MA(10) 0.986592");
  el(svg, "text", { x: 1138, y: 198.500 }, "0.987328");
  el(svg, "text", { x: 1138, y: 220 }, "0.981737");
  line(svg, 1132, 191, 1136, 191);
  line(svg, 1132, 221, 1136, 221);
  priceTag(svg, 1132, 91, "0.98757");
  caption(svg, o, "USDCHF,H1");
}

{
  const svg = document.getElementById("gbpusd");
  const o = { x: 273, top: 289.5, bottom: 440.5,
    prices: [[310, "1.44240"], [342.5, "1.43735"], [375, "1.43230"], [407.5, "1.42725"]],
    times: ["10 Mar 2016", "10 Mar 21:00", "11 Mar 01:00", "11 Mar 05:00", "11 Mar 09:00", "11 Mar 13:00", "11 Mar 17:00"] };
  const g = frame(svg, o);
  /* Each bar: high, low, open, close. */
  const bars = [[391,391,391,391],[379,403,391,399],[393,404,399,399],[393,403,399,401],[398,406,401,405],[399,408,405,402],
    [398,405,402,399],[396,406,399,401],[396,411,401,410],[398,411,410,407],[405,415,407,406],[402,410,406,406],[400,410,406,408],
    [405,412,408,405],[401,413,405,407],[400,416,407,null],[407,420,null,413],[391,414,413,404],[384,404,404,399],[383,399,399,390],
    [384,403,390,396],[388,402,396,397],[361,404,397,363],[326,365,363,329],[301,340,330,null]];
  bars.forEach(([high, low, open, close], i) => {
    const x = 273 + i * 16.3;
    line(g, x, high, x, low, "#000", 1.8);
    if (open) line(g, x - 6, open, x, open, "#000", 1.8);
    if (close) line(g, x, close, x + 6, close, "#000", 1.8);
  });
  curve(g, 273, 16.3, 0, [437,433,429,425,421,418,414,411,409,406,401,395,392,393,395,397,397,397,397,397,396,396,392,387,380], "#800080", 2);
  curve(g, 273, 16.3, 3, [442,439,436,432,429,427,424,419,414,412,413,414,415,415,415,415,415,414,414,410,406,399], "#ff9a1a", 2);
  caption(svg, o, "GBPUSD,H1");
}

{
  const svg = document.getElementById("usdjpy");
  const o = { x: 741, top: 289.5, bottom: 440.5,
    prices: [[311, "113.920"], [343.5, "113.570"], [376, "113.220"], [408.5, "112.870"]],
    times: ["11 Mar 2016", "11 Mar 05:00", "11 Mar 09:00", "11 Mar 13:00", "11 Mar 17:00", "11 Mar 21:00", "14 Mar 02:00"] };
  const g = frame(svg, o);
  line(g, 741, 390.5, 1132, 390.5, "#aaa");
  candles(g, 741, 16.3, 10, [
    [0,370,370,411,411,0],[1,367,370,371,398,1],[2,367,370,383,389,1],[3,348,352,382,384,0],[4,341,348,352,359,0],
    [5,346,348,359,364,1],[6,344,350,358,361,0],[7,324,331,349,357,0],[8,314,329,330,334,1],[9,316,320,330,331,0],
    [10,311,320,322,329,1],[11,319,322,325,330,1],[12,319,320,325,332,0],[13,319,320,343,352,1],[14,330,341,356,356,1],
    [15,349,350,354,356,0],[16,327,335,350,352,0],[17,323,329,335,337,0],[18,327,329,336,336,1],[19,319,331,336,337,0],
    [20,320,321,330,334,0],[21,316,321,322,327,1],[22,322,324,333,338,0],[23,308,309,324,330,0],[24,302,310,311,317,1]]);
  const upper = [400,398,398,383,380,374,374,374,374,374,374,371,369,369,350,335,333,329,335,347,347,347,347,347,353];
  const lower = [408,408,408,400,400,397,395,395,395,395,395,395,395,395,378,365,365,365,365,365,365,365,365,365,365];
  upper.forEach((y, i) => { if (i) line(g, 741 + i * 16.3, y, 741 + i * 16.3, lower[i], "#f4b888"); });
  curve(g, 741, 16.3, 0, upper, "#f4b080", 1);
  curve(g, 741, 16.3, 0, lower, "#d3c3d3", 1);
  curve(g, 741, 16.3, 0, [318,327,322,317,325,343,343,336,330,340,338,326,341,337,324,320,321,319,323,320,312,327,326,352,367], "#3fe03f", 1);
  curve(g, 741, 16.3, 0, [...Array(15).fill(347),357,357,372,372,368,366,365,365,365,362], "#1010e0", 2);
  curve(g, 741, 16.3, 0, [389,399,394,384,381,381,381,372,367,356,349,349,337,337,335,337,338,338,338,342,342,341,341,337,328], "#e01010", 2.2);
  eventTag(g, 1098.5, 423.500, 25, "00:50", "#a5e3dd", true);
  priceTag(svg, 1132, 390.5, "113.057");
  caption(svg, o, "USDJPY,H1");
}

const trades = [
  ["138434393", "2016.03.01 15:37:23", "buy", "5.00", "1.08553", "1.10947", "11 970.00"],
  ["138434548", "2016.03.01 15:38:23", "buy", "5.00", "1.08553", "1.10947", "11 970.00"],
  ["138436006", "2016.03.01 15:42:33", "buy", "5.00", "1.08627", "1.10947", "11 600.00"],
  ["138436012", "2016.03.01 15:42:34", "buy", "5.00", "1.08627", "1.10947", "11 600.00"],
  ["138484337", "2016.03.08 12:56:09", "sell", "3.00", "1.10143", "1.10955", "-2 436.00"],
  ["138485364", "2016.03.10 07:46:04", "sell", "1.00", "1.09792", "1.10955", "-1 163.00"],
  ["138492887", "2016.03.10 16:41:20", "buy", "1.00", "1.11486", "1.10947", "-539.00"]
];
document.getElementById("trades").innerHTML = trades.map(([ticket, time, type, volume, open, price, profit]) => `
  <tr><td><svg viewBox="0 0 16 16"><use href="#doc"/><circle cx="12" cy="12" r="3.5" fill="${type === "buy" ? "#2050d0" : "#d02030"}"/></svg>eurusd</td>
  <td>${ticket}</td><td>${time}</td><td>${type}</td><td>${volume}</td><td>${open}</td><td>0.00000</td><td>0.00000</td><td>${price}</td>
  <td>${profit}<button aria-label="Close position ${ticket}">×</button></td></tr>`).join("");
```
